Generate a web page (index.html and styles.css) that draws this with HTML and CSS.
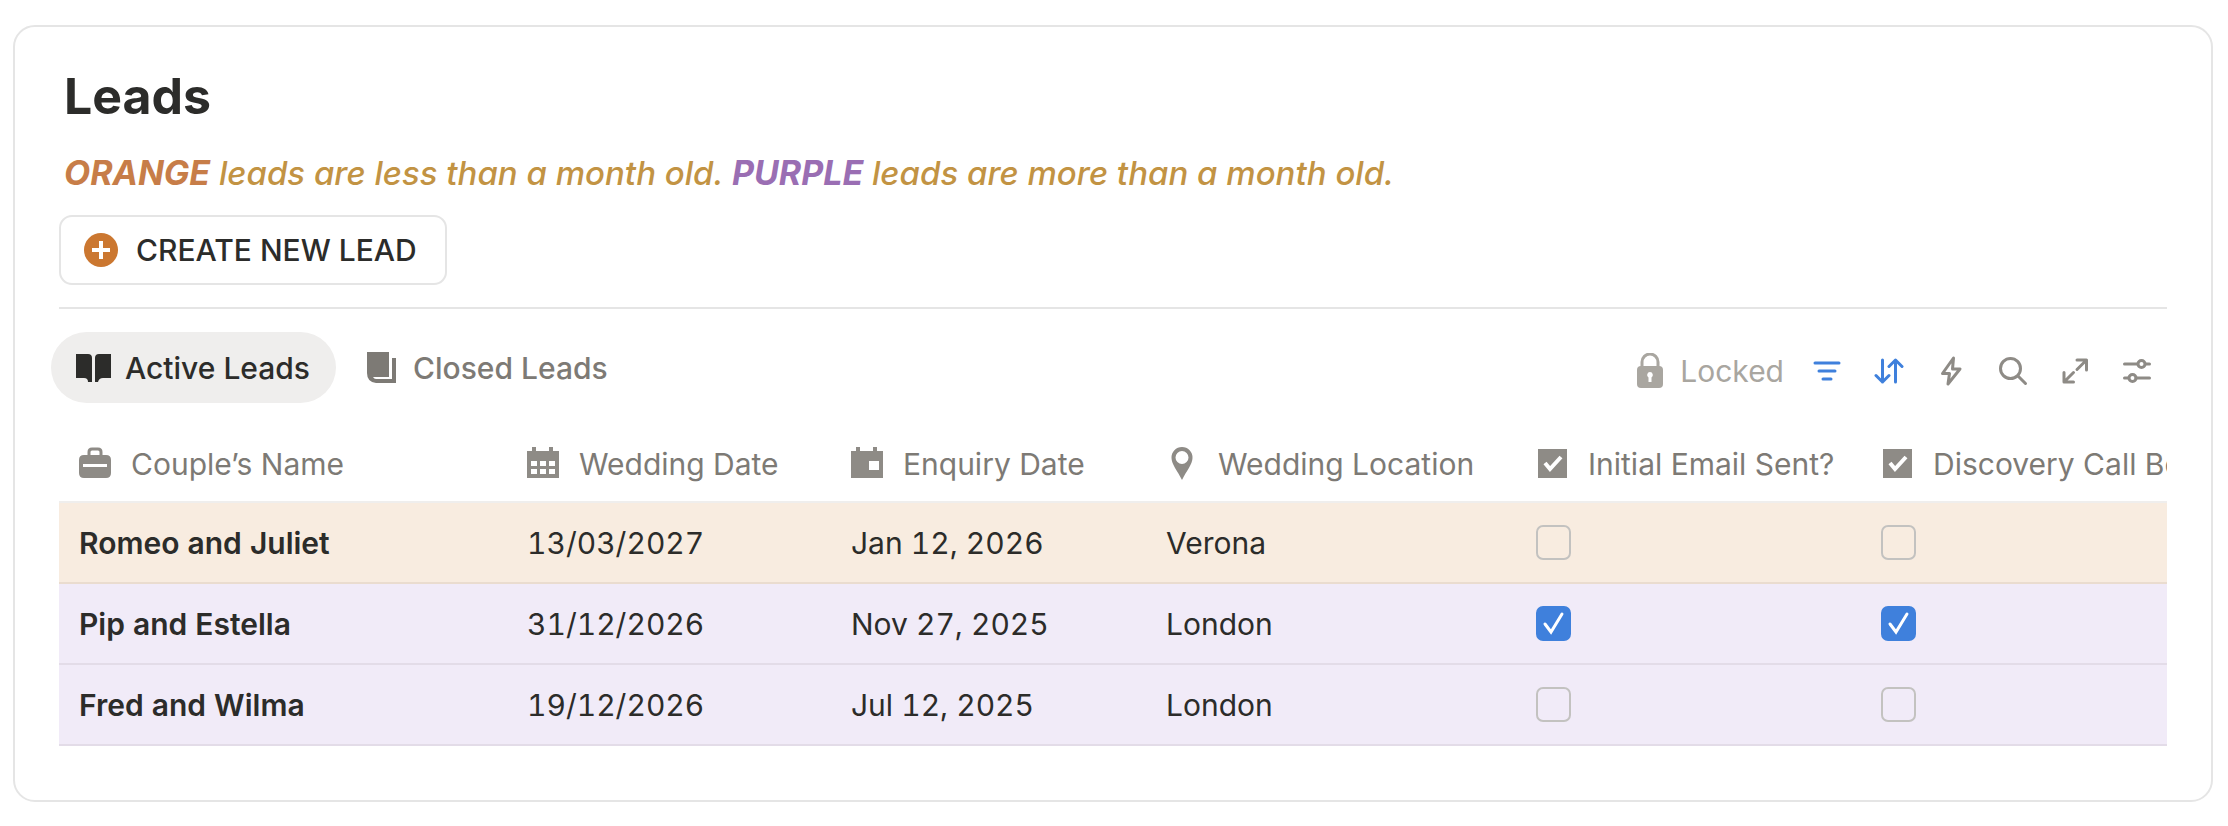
FILE: index.html
```html
<!DOCTYPE html>
<html lang="en">
<head>
<meta charset="utf-8">
<title>Leads</title>
<link rel="stylesheet" href="styles.css">
</head>
<body>
<main class="card">
  <h1 class="title">Leads</h1>
  <p class="legend"><strong class="orange">ORANGE</strong> leads are less than a month old. <strong class="purple">PURPLE</strong> leads are more than a month old.</p>
  <button class="create" type="button">
    <svg class="create-icon" viewBox="0 0 34 34" aria-hidden="true"><circle cx="17" cy="17" r="17" fill="#cb7730"/><path d="M17 8v18M8 17h18" stroke="#fff" stroke-width="4" fill="none"/></svg>
    CREATE NEW LEAD
  </button>
  <hr class="rule">
  <div class="toolbar">
    <nav class="tabs" aria-label="Views">
      <button class="tab tab-active" type="button">
        <svg class="icon" viewBox="0 0 36 36" fill="currentColor" aria-hidden="true"><path d="M1 4h12q4 0 4 4v24h-4q0-4-4-4H1zM36 4H24q-4 0-4 4v24h3q1-4 5-4h8z"/></svg>
        Active Leads
      </button>
      <button class="tab" type="button">
        <svg class="icon" viewBox="0 0 36 36" fill="currentColor" aria-hidden="true"><path d="M4 2h22v25H10q1 2 3 2h16V8h4v25H13q-9-1-9-10z"/></svg>
        Closed Leads
      </button>
    </nav>
    <div class="tools">
      <span class="locked">
        <svg class="lock" viewBox="0 0 28 36" aria-hidden="true"><path d="M6 14V9a8 8 0 0 1 16 0v5" fill="none" stroke="currentColor" stroke-width="3"/><rect x="1" y="13" width="26" height="22" rx="4" fill="currentColor"/><path d="M14 19a3 3 0 0 1 1.500 5.500V29h-3v-4.500A3 3 0 0 1 14 19z" fill="#fff"/></svg>
        Locked
      </span>
      <button class="tool tool-on" type="button" aria-label="Filter"><svg class="tool-icon" viewBox="0 0 30 30"><path d="M3 7h24M7 15h16M11 23h8"/></svg></button>
      <button class="tool tool-on" type="button" aria-label="Sort"><svg class="tool-icon" viewBox="0 0 30 30"><path d="M8.500 4v22M2 19.500l6.500 6.500 6.500-6.500M21.500 26V4M15 10.500L21.500 4l6.500 6.500"/></svg></button>
      <button class="tool" type="button" aria-label="Automations"><svg class="tool-icon" viewBox="0 0 30 30"><path d="M17.500 2L6.500 17.500h7L12 28l12-15h-7.500z"/></svg></button>
      <button class="tool" type="button" aria-label="Search"><svg class="tool-icon" viewBox="0 0 30 30"><circle cx="12.500" cy="12.500" r="10"/><path d="M20 20l7.500 7.500"/></svg></button>
      <button class="tool" type="button" aria-label="Expand"><svg class="tool-icon" viewBox="0 0 30 30"><path d="M17 4h9.500v10M26.500 4l-9.500 9.500M4 16.500v9.500h9.500M4 26l9.500-9.500"/></svg></button>
      <button class="tool" type="button" aria-label="Settings"><svg class="tool-icon" viewBox="0 0 30 30"><path d="M2.500 8h13M24 8h3.500M2.500 22h3.500M14 22h13.500"/><circle cx="19.500" cy="8" r="3.500"/><circle cx="10.500" cy="22" r="3.500"/></svg></button>
    </div>
  </div>
  <div class="scroller">
    <table class="grid">
      <colgroup><col class="c-name"><col class="c-wedding"><col class="c-enquiry"><col class="c-place"><col class="c-check"><col class="c-check"></colgroup>
      <thead>
        <tr>
          <th scope="col"><span class="head"><svg class="head-icon" viewBox="0 0 36 36" fill="currentColor" aria-hidden="true"><path d="M12 10V6q0-3 3-3h6q3 0 3 3v4" fill="none" stroke="currentColor" stroke-width="3"/><path fill-rule="evenodd" d="M7 9h22q5 0 5 5v13q0 5-5 5H7q-5 0-5-5V14q0-5 5-5zM6 18v3h24v-3z"/></svg>Couple’s Name</span></th>
          <th scope="col"><span class="head"><svg class="head-icon" viewBox="0 0 36 36" fill="currentColor" aria-hidden="true"><path fill-rule="evenodd" d="M2 5h5V1h4v4h13V1h4v4h6v27H2zM6 15v5h6v-5zM15 15v5h6v-5zM24 15v5h6v-5zM6 23v5h6v-5zM15 23v5h6v-5zM24 23v5h6v-5z"/></svg>Wedding Date</span></th>
          <th scope="col"><span class="head"><svg class="head-icon" viewBox="0 0 36 36" fill="currentColor" aria-hidden="true"><path fill-rule="evenodd" d="M2 5h5V1h4v4h13V1h4v4h6v27H2zM20 15v9h10v-9z"/></svg>Enquiry Date</span></th>
          <th scope="col"><span class="head"><svg class="head-icon" viewBox="0 0 36 36" fill="currentColor" aria-hidden="true"><path fill-rule="evenodd" d="M18 1a10.500 10.500 0 0 1 10.500 11c0 6-6 13-10.500 22C13.500 25 7.500 18 7.500 12A10.500 10.500 0 0 1 18 1zM18 5a6.500 6.500 0 1 0 0 13a6.500 6.500 0 0 0 0-13z"/></svg>Wedding Location</span></th>
          <th scope="col"><span class="head"><svg class="head-icon" viewBox="0 0 36 36" aria-hidden="true"><path d="M4 3h29v29H4z" fill="currentColor"/><path d="M11 17l5 6 11-12" fill="none" stroke="#fff" stroke-width="4"/></svg>Initial Email Sent?</span></th>
          <th scope="col"><span class="head"><svg class="head-icon" viewBox="0 0 36 36" aria-hidden="true"><path d="M4 3h29v29H4z" fill="currentColor"/><path d="M11 17l5 6 11-12" fill="none" stroke="#fff" stroke-width="4"/></svg>Discovery Call Booked?</span></th>
        </tr>
      </thead>
      <tbody>
        <tr class="row-orange">
          <td class="name">Romeo and Juliet</td><td>13/03/2027</td><td>Jan 12, 2026</td><td>Verona</td>
          <td><input class="check" type="checkbox" aria-label="Initial email sent to Romeo and Juliet"></td>
          <td><input class="check" type="checkbox" aria-label="Discovery call booked with Romeo and Juliet"></td>
        </tr>
        <tr class="row-purple">
          <td class="name">Pip and Estella</td><td>31/12/2026</td><td>Nov 27, 2025</td><td>London</td>
          <td><input class="check" type="checkbox" checked aria-label="Initial email sent to Pip and Estella"></td>
          <td><input class="check" type="checkbox" checked aria-label="Discovery call booked with Pip and Estella"></td>
        </tr>
        <tr class="row-purple">
          <td class="name">Fred and Wilma</td><td>19/12/2026</td><td>Jul 12, 2025</td><td>London</td>
          <td><input class="check" type="checkbox" aria-label="Initial email sent to Fred and Wilma"></td>
          <td><input class="check" type="checkbox" aria-label="Discovery call booked with Fred and Wilma"></td>
        </tr>
      </tbody>
    </table>
  </div>
</main>
</body>
</html>
```
FILE: styles.css
```css
* { box-sizing: border-box; }

body {
  margin: 0;
  padding: 25px 15px 25px 13px;
  background: #fff;
  color: #2c2c2a;
  font-family: Inter, "Liberation Sans", sans-serif;
  font-size: 30px;
  line-height: 40px;
}

button {
  font: inherit;
  color: inherit;
  cursor: pointer;
}

.card {
  border: 2px solid #e5e5e5;
  border-radius: 22px;
  padding: 36px 44px 54px;
}

.title {
  margin: 0;
  padding: 0 5px;
  font-size: 50px;
  font-weight: 700;
  line-height: 66px;
}

.legend {
  margin: 20px 0 18px;
  padding: 0 5px;
  color: #c29343;
  font-size: 33px;
  font-style: italic;
  font-weight: 500;
  line-height: 48px;
}

.legend strong {
  font-size: 34px;
  font-weight: 700;
}

.orange { color: #c77d48; }
.purple { color: #9a6eb3; }

.create {
  display: flex;
  align-items: center;
  gap: 18px;
  height: 70px;
  padding: 0 28px 0 23px;
  border: 2px solid #e5e5e5;
  border-radius: 13px;
  background: #fff;
  font-weight: 500;
}

.create-icon {
  width: 34px;
  height: 34px;
}

.rule {
  margin: 22px 0 23px;
  border: 0;
  border-top: 2px solid #e5e5e5;
}

.toolbar {
  display: flex;
  align-items: center;
  justify-content: space-between;
  margin: 0 7px 0 -8px;
}

.tabs {
  display: flex;
  gap: 3px;
}

.tab {
  display: flex;
  align-items: center;
  gap: 14px;
  height: 71px;
  padding: 0 26px 0 24px;
  border: 0;
  border-radius: 36px;
  background: none;
  color: #7d7a75;
  font-weight: 500;
}

.tab-active {
  background: #efeeed;
  color: #2c2c2a;
}

.icon {
  width: 36px;
  height: 36px;
}

.tools {
  display: flex;
  align-items: center;
  gap: 16px;
  padding-top: 6px;
}

.locked {
  display: flex;
  align-items: center;
  gap: 16px;
  margin-right: 4px;
  color: #a9a6a0;
}

.lock {
  width: 28px;
  height: 36px;
}

.tool {
  display: flex;
  align-items: center;
  justify-content: center;
  width: 46px;
  height: 46px;
  padding: 0;
  border: 0;
  background: none;
  color: #8e8b86;
}

.tool-on { color: #3f80dc; }

.tool-icon {
  width: 30px;
  height: 30px;
  fill: none;
  stroke: currentColor;
  stroke-width: 3;
  stroke-linecap: round;
  stroke-linejoin: round;
}

.scroller {
  margin-top: 24px;
  overflow: hidden;
}

.grid {
  width: 2147px;
  table-layout: fixed;
  border-collapse: separate;
  border-spacing: 0;
}

.c-name { width: 448px; }
.c-wedding { width: 324px; }
.c-enquiry { width: 315px; }
.c-place { width: 370px; }
.c-check { width: 345px; }

th {
  height: 76px;
  padding: 0 0 0 18px;
  border-bottom: 2px solid #efeeed;
  color: #7d7a75;
  font-weight: 400;
  text-align: left;
  white-space: nowrap;
}

.head {
  display: flex;
  align-items: center;
  gap: 18px;
}

.head-icon {
  flex: none;
  width: 36px;
  height: 36px;
  color: #8e8b86;
}

td {
  height: 81px;
  padding: 0 0 0 20px;
  font-variant-numeric: tabular-nums;
  white-space: nowrap;
}

.name { font-weight: 600; }

.row-orange td {
  border-bottom: 2px solid #eadccf;
  background: #f8ece0;
}

.row-purple td {
  border-bottom: 2px solid #e3dce8;
  background: #f1ebf8;
}

.check {
  display: block;
  width: 35px;
  height: 35px;
  margin: 0;
  border: 2px solid #c3c2c0;
  border-radius: 7px;
  appearance: none;
}

.check:checked {
  border-color: #3f80dc;
  background: #3f80dc url("data:image/svg+xml,%3Csvg xmlns='http://www.w3.org/2000/svg' viewBox='0 0 31 31'%3E%3Cpath d='M7 16l6 8 11-18' fill='none' stroke='%23fff' stroke-width='3' stroke-linecap='round'/%3E%3C/svg%3E") center / 31px 31px no-repeat;
}
```
